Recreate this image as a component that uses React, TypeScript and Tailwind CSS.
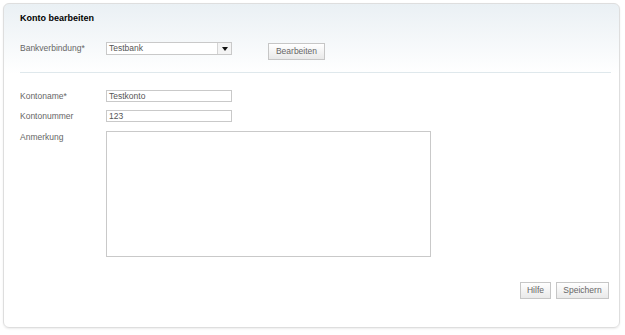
export default function App() {
  return (
    <div className="w-[625px] h-[335px] bg-white pt-[3px] pl-[3px] font-[family-name:Liberation_Sans,Arial,sans-serif] text-[8.5px] text-[#666]">
      <div className="w-[617px] h-[325px] rounded-[6px] border border-[#dedede] shadow-[0_1px_2px_rgba(0,0,0,0.08)] bg-[linear-gradient(to_bottom,#eaf0f4_0px,#ffffff_70px)] pl-[16px] pr-[10px]">
        <div className="pt-[6px] h-[26px] leading-[16px] font-bold text-[9px] text-black">Konto bearbeiten</div>

        <div className="mt-[12px] flex items-start">
          <div className="w-[86px] leading-[12px]">Bankverbindung*</div>
          <div className="w-[126px] h-[13px] flex border border-[#c9c9c9] bg-white">
            <div className="flex-1 pl-[2px] leading-[11px] text-[#555]">Testbank</div>
            <div className="w-[14px] border-l border-[#d4d4d4] bg-[#f4f4f4] flex items-center justify-center">
              <svg width="6" height="4" viewBox="0 0 6 4">
                <path d="M0 0h6L3 4z" fill="#111" />
              </svg>
            </div>
          </div>
          <button className="ml-[36px] mt-[1px] h-[17px] w-[57px] border border-[#c6c6c6] bg-[linear-gradient(to_bottom,#ffffff,#e9e9e9)] text-[8.5px] leading-[15px] text-[#666]">
            Bearbeiten
          </button>
        </div>

        <div className="mt-[12px] w-[591px] border-t border-[#dfe8ec]" />

        <div className="mt-[17px] flex items-center">
          <div className="w-[86px] leading-[12px]">Kontoname*</div>
          <div className="w-[126px] h-[12px] border border-[#c9c9c9] bg-white pl-[2px] leading-[10px] text-[#555]">Testkonto</div>
        </div>

        <div className="mt-[8px] flex items-center">
          <div className="w-[86px] leading-[12px]">Kontonummer</div>
          <div className="w-[126px] h-[12px] border border-[#c9c9c9] bg-white pl-[2px] leading-[10px] text-[#555]">123</div>
        </div>

        <div className="mt-[9px] flex items-start">
          <div className="w-[86px] leading-[12px]">Anmerkung</div>
          <div className="w-[325px] h-[126px] border border-[#c9c9c9] bg-white" />
        </div>

        <div className="mt-[25px] flex justify-end gap-[5px]">
          <button className="h-[17px] w-[31px] border border-[#c6c6c6] bg-[linear-gradient(to_bottom,#ffffff,#e9e9e9)] text-[8.5px] leading-[15px] text-[#666]">
            Hilfe
          </button>
          <button className="h-[17px] w-[53px] border border-[#c6c6c6] bg-[linear-gradient(to_bottom,#ffffff,#e9e9e9)] text-[8.5px] leading-[15px] text-[#666]">
            Speichern
          </button>
        </div>
      </div>
    </div>
  );
}
